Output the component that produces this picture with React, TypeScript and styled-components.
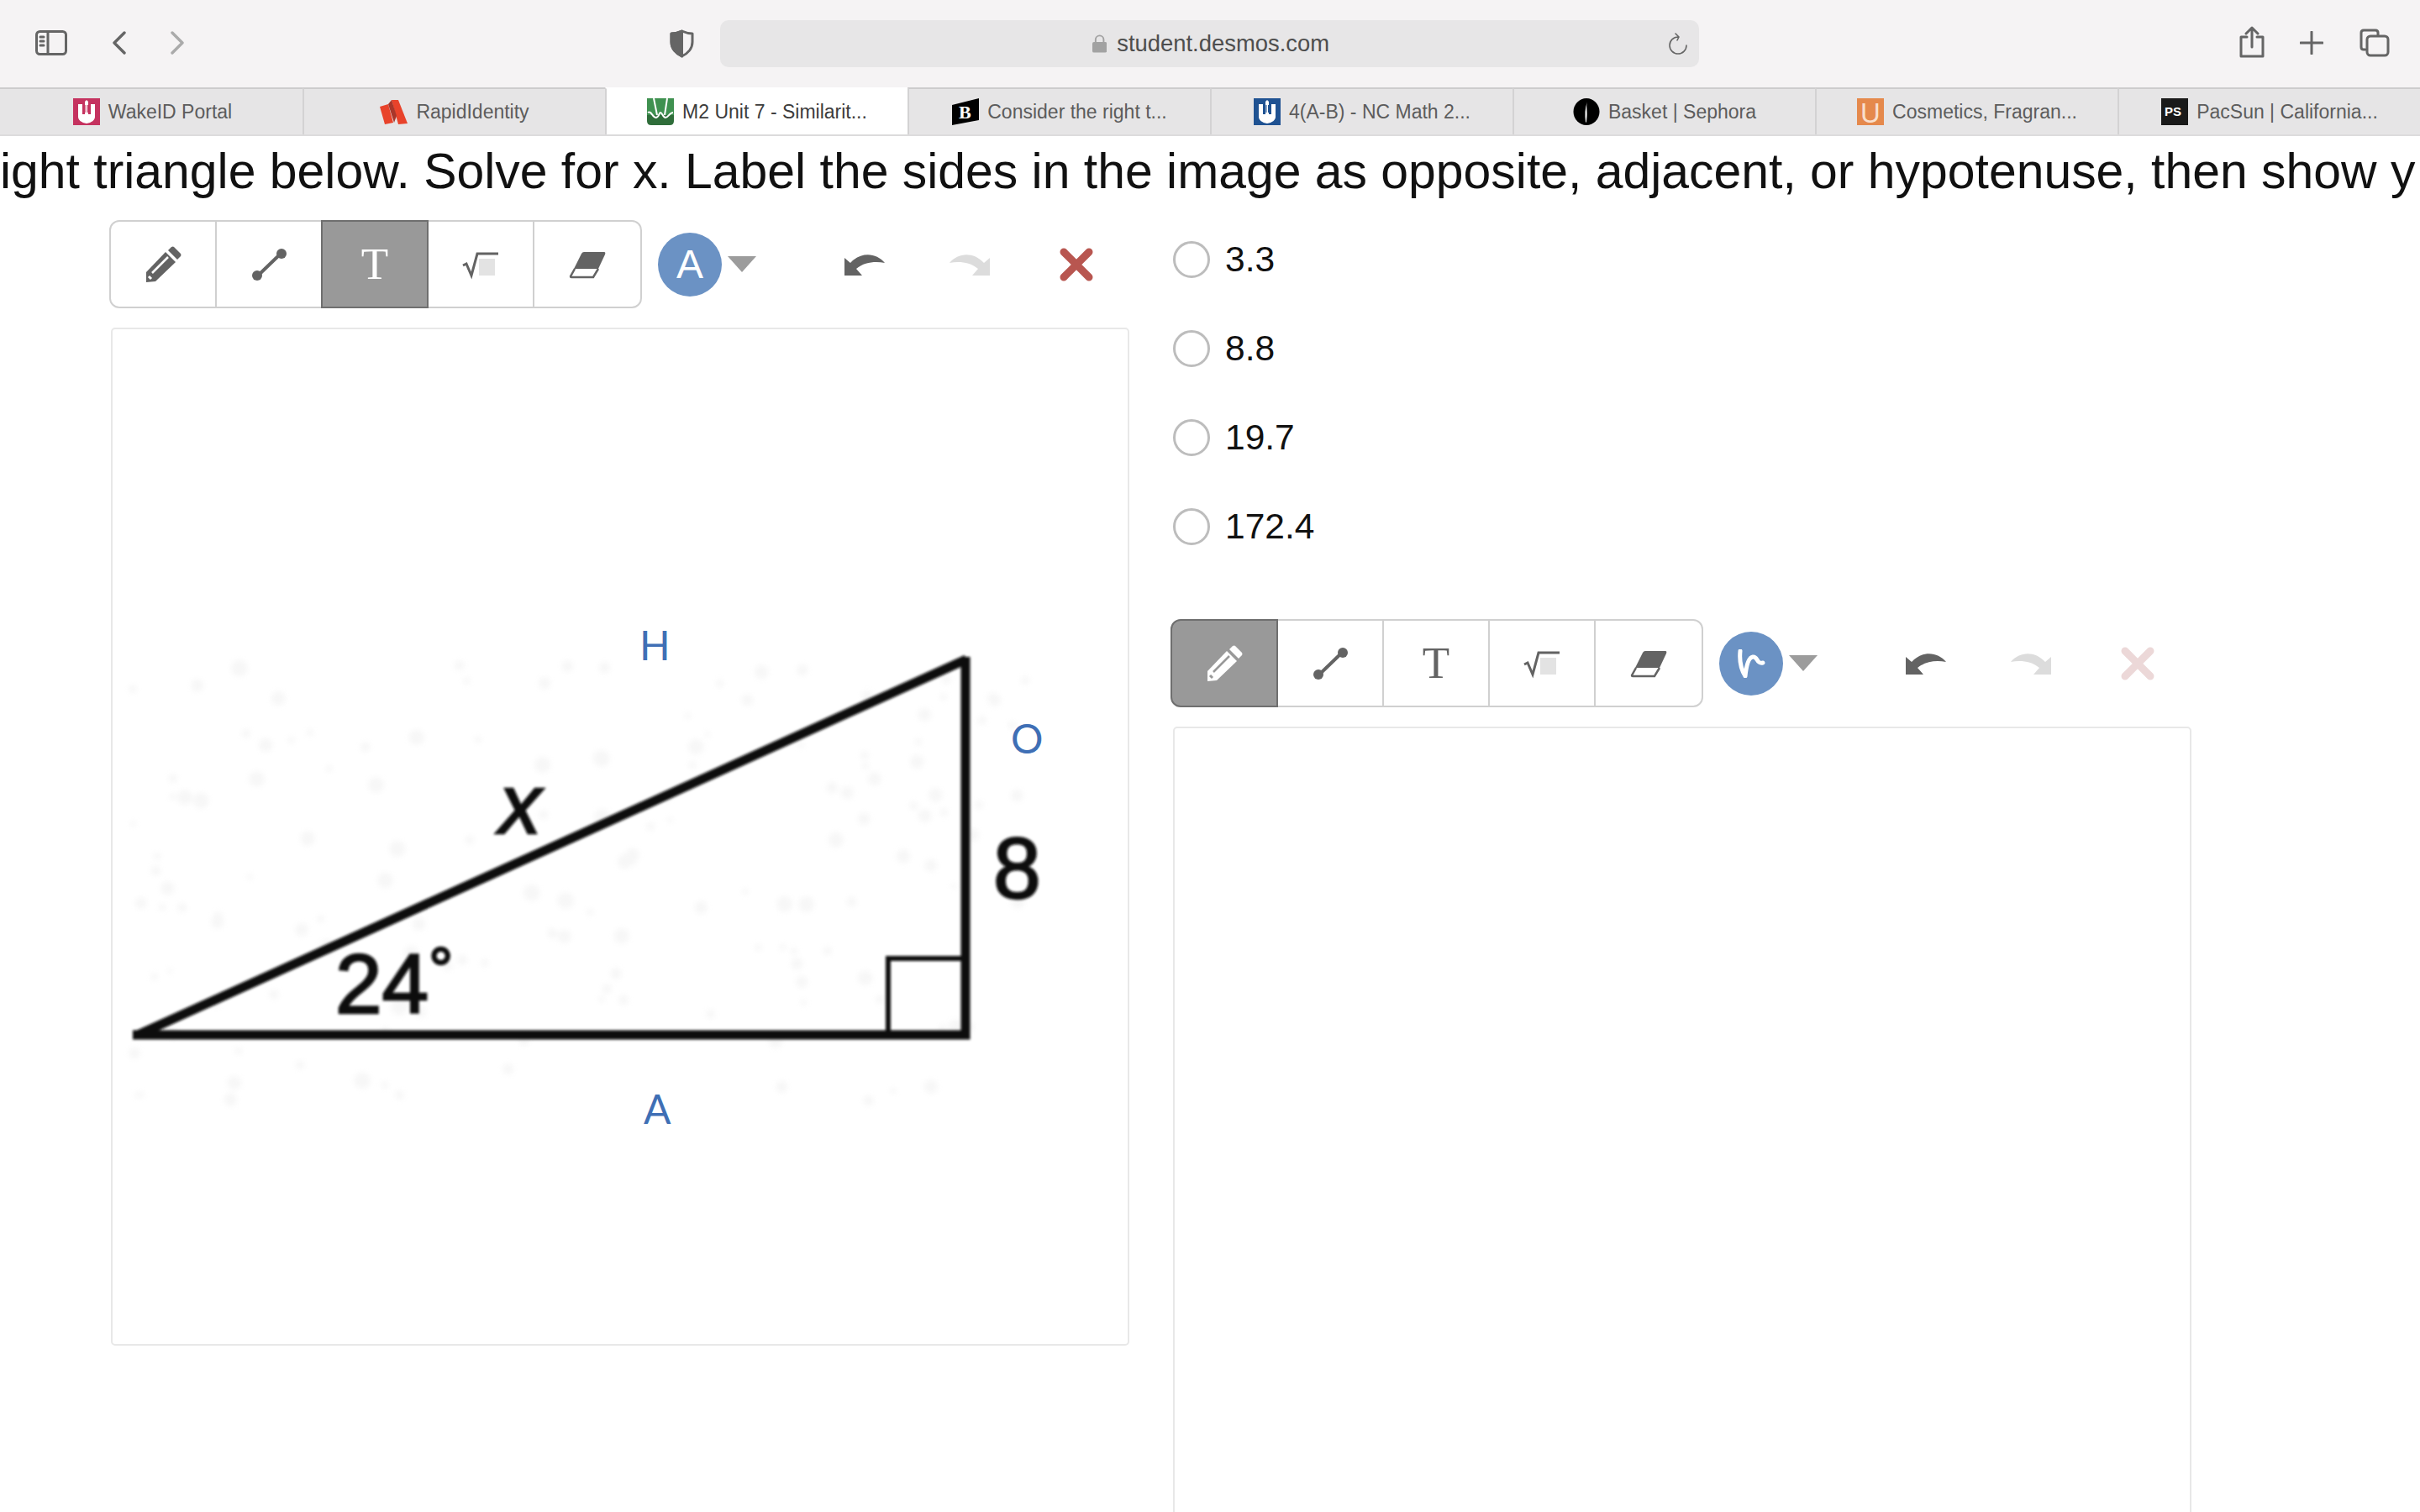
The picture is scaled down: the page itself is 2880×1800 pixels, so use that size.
// src/App.tsx

import styled, { createGlobalStyle } from "styled-components";

const GlobalStyle = createGlobalStyle`
  html, body {
    margin: 0;
    padding: 0;
    background: #fff;
    overflow: hidden;
  }
  * {
    box-sizing: border-box;
  }
`;

const Page = styled.div`
  width: 2880px;
  height: 1800px;
  overflow: hidden;
  font-family: "Liberation Sans", Arial, sans-serif;
  background: #fff;
`;

const TopBar = styled.header`
  height: 104px;
  padding-top: 24px;
  display: flex;
  align-items: flex-start;
  background: #f5f3f4;
  color: #656565;
`;

const NavIcon = styled.svg<{ $left: number; $top: number }>`
  display: block;
  flex: none;
  margin-left: ${(p) => p.$left}px;
  margin-top: ${(p) => p.$top}px;
  fill: none;
  stroke: currentColor;
  stroke-width: 3;
  stroke-linecap: round;
  stroke-linejoin: round;
`;

const AddressBar = styled.div`
  flex: none;
  width: 1165px;
  height: 56px;
  margin-left: 31px;
  padding: 0 13px 0 443px;
  display: flex;
  align-items: center;
  border-radius: 10px;
  background: #e7e6e7;
`;

const Url = styled.span`
  margin-left: 12px;
  font-size: 27.4px;
  color: #4e4e4e;
`;

const TabRow = styled.nav`
  height: 58px;
  display: flex;
  border-bottom: 2px solid #dcdbdc;
`;

const Tab = styled.div<{ $active?: boolean }>`
  flex: 0 0 360px;
  display: flex;
  justify-content: center;
  align-items: center;
  gap: 10px;
  font-size: 23px;
  color: ${(p) => (p.$active ? "#3c3c3c" : "#5c5c5c")};
  background: ${(p) => (p.$active ? "#fff" : "#e6e5e6")};
  border-top: 2px solid ${(p) => (p.$active ? "#fff" : "#cdcccd")};
  border-left: 2px solid #d3d2d3;
  &:first-child {
    border-left: 0;
    padding-left: 3px;
  }
`;

const Question = styled.h1`
  margin: 0;
  height: 100px;
  padding-bottom: 18px;
  display: flex;
  align-items: center;
  overflow: hidden;
  white-space: nowrap;
  font-size: 58.9px;
  font-weight: 400;
  color: #111;
`;

const Columns = styled.main`
  padding-left: 130px;
  display: flex;
  gap: 49px;
`;

const Column = styled.section`
  flex: none;
  width: 1214px;
`;

const RightColumn = styled(Column)`
  padding-left: 3px;
`;

const Options = styled.div`
  padding-top: 25px;
  margin-bottom: 88px;
  display: flex;
  flex-direction: column;
  gap: 62px;
`;

const Option = styled.label`
  height: 44px;
  display: flex;
  align-items: center;
  gap: 18px;
  font-size: 42.5px;
  color: #111;
`;

const Radio = styled.span`
  flex: none;
  width: 44px;
  height: 44px;
  border: 3px solid #bdbdbd;
  border-radius: 50%;
`;

const SketchBar = styled.div<{ $shift?: number }>`
  height: 105px;
  margin-left: ${(p) => p.$shift ?? 0}px;
  display: flex;
  align-items: center;
`;

const ToolGroup = styled.div`
  flex: none;
  width: 634px;
  height: 100%;
  display: flex;
`;

const Tool = styled.div<{ $active?: boolean }>`
  position: relative;
  z-index: ${(p) => (p.$active ? 1 : 0)};
  flex: 0 0 128px;
  margin-left: -2px;
  display: flex;
  justify-content: center;
  align-items: center;
  border: 2px solid ${(p) => (p.$active ? "#6f6f6f" : "#d0d0d0")};
  color: ${(p) => (p.$active ? "#fff" : "#636363")};
  background: ${(p) => (p.$active ? "#999" : "#fff")};
  --hole: ${(p) => (p.$active ? "#999" : "#fff")};
  &:first-child {
    margin-left: 0;
    border-radius: 12px 0 0 12px;
  }
  &:last-child {
    flex-basis: 130px;
    border-radius: 0 12px 12px 0;
  }
`;

const ToolGlyph = styled.span`
  font-family: "Liberation Serif", "Times New Roman", serif;
  font-size: 53px;
  line-height: 1;
`;

const ToolIcon = styled.svg`
  display: block;
  width: 44px;
  height: 44px;
`;

const Avatar = styled.div`
  flex: none;
  width: 76px;
  height: 76px;
  margin-left: 19px;
  display: flex;
  justify-content: center;
  align-items: center;
  border-radius: 50%;
  background: #6b92c4;
  color: #fff;
  font-size: 48px;
`;

const Caret = styled.span`
  flex: none;
  width: 0;
  height: 0;
  margin-left: 7px;
  border-left: 17px solid transparent;
  border-right: 17px solid transparent;
  border-top: 19px solid #9c9c9c;
`;

const ActionIcon = styled.svg<{ $gap: number; $color: string }>`
  display: block;
  flex: none;
  margin-left: ${(p) => p.$gap}px;
  color: ${(p) => p.$color};
`;

const Canvas = styled.div<{ $shift?: number }>`
  position: relative;
  width: 1212px;
  height: 1212px;
  margin-top: 23px;
  margin-left: ${(p) => p.$shift ?? 0}px;
  border: 2px solid #e8e8e8;
  border-radius: 5px;
  background: #fff;
`;

const CanvasLabel = styled.span<{ $x: number; $y: number }>`
  position: absolute;
  left: ${(p) => p.$x}px;
  top: ${(p) => p.$y}px;
  font-family: Lato, "Liberation Sans", sans-serif;
  font-size: 48px;
  line-height: 1;
  color: #3f6fb5;
`;

const Picture = styled.svg`
  display: block;
  width: 1208px;
  height: 1208px;
`;

const ImageText = styled.text`
  font-family: "Liberation Sans", Arial, sans-serif;
  fill: #111;
  stroke: #111;
  stroke-width: 2.5px;
`;

const tabs = [
  { id: "wake", title: "WakeID Portal" },
  { id: "rapid", title: "RapidIdentity" },
  { id: "desmos", title: "M2 Unit 7 - Similarit...", active: true },
  { id: "brainly", title: "Consider the right t..." },
  { id: "wcpss", title: "4(A-B) - NC Math 2..." },
  { id: "sephora", title: "Basket | Sephora" },
  { id: "ulta", title: "Cosmetics, Fragran..." },
  { id: "pacsun", title: "PacSun | California..." },
];

const options = ["3.3", "8.8", "19.7", "172.4"];

const hash = (n: number) => {
  const v = Math.sin(n * 127.1 + 311.7) * 43758.5453;
  return v - Math.floor(v);
};

// faint jpeg noise around the pasted triangle image
const specks = Array.from({ length: 150 }, (_, i) => ({
  x: 10 + hash(i) * 1080,
  y: 400 + hash(i + 500) * 520,
  r: 3 + hash(i + 900) * 7,
}));

const Favicon = ({ id }: { id: string }) => {
  if (id === "wake" || id === "wcpss") {
    return (
      <svg width="32" height="32" viewBox="0 0 32 32">
        <rect width="32" height="32" fill={id === "wake" ? "#c5325f" : "#1f5292"} />
        <path
          d="M6 7h5v12h3V4l2-2 2 2v15h3V7h5v15c0 4-4 7-10 8-6-1-10-4-10-8z"
          fill="#fff"
        />
        <path d="M14.5 8h1v9h-1zM17 8h1v9h-1z" fill={id === "wake" ? "#c5325f" : "#1f5292"} />
      </svg>
    );
  }
  if (id === "rapid") {
    return (
      <svg width="33" height="32" viewBox="0 0 33 32">
        <path d="M0 10l10-3 6 22-10 2z" fill="#e8432b" />
        <path d="M14 2h8l11 28-11 1z" fill="#e8432b" />
        <path d="M10 7l4-5 6 19-3 8z" fill="#a8362a" />
      </svg>
    );
  }
  if (id === "desmos") {
    return (
      <svg width="32" height="32" viewBox="0 0 32 32">
        <path d="M0 0h32v27q0 5-5 5H5q-5 0-5-5z" fill="#2f6d3a" />
        <path d="M0 0h32v20H0z" fill="#3f9150" />
        <path
          d="M1 17c4-3 6 7 10 6s3-6 5-6 3 6 6 6 5-6 9-6M8 0l4 20M24 0l-3 20"
          fill="none"
          stroke="#fff"
          strokeWidth="2"
        />
      </svg>
    );
  }
  if (id === "brainly") {
    return (
      <svg width="32" height="32" viewBox="0 0 32 32">
        <path d="M0 8L32 0v26L0 32z" fill="#000" />
        <text x="8" y="24" fontFamily="Liberation Serif" fontWeight="700" fontSize="22" fill="#fff">
          B
        </text>
      </svg>
    );
  }
  if (id === "sephora") {
    return (
      <svg width="32" height="32" viewBox="0 0 32 32">
        <ellipse cx="16" cy="16" rx="15.5" ry="16" fill="#000" />
        <path d="M17 4c-2 8 1 10-1 24 0 1-1 1-1 0-1-8-1-16 2-24z" fill="#fff" />
      </svg>
    );
  }
  if (id === "ulta") {
    return (
      <svg width="32" height="32" viewBox="0 0 32 32">
        <rect width="32" height="32" fill="#e5894c" />
        <text x="4" y="29" fontFamily="Liberation Sans" fontSize="33" fill="#f9dfcc">
          U
        </text>
      </svg>
    );
  }
  return (
    <svg width="32" height="32" viewBox="0 0 32 32">
      <rect width="32" height="32" fill="#1a1a1a" />
      <text x="4" y="21" fontFamily="Liberation Sans" fontWeight="700" fontSize="15" fill="#fff">
        PS
      </text>
    </svg>
  );
};

const PencilIcon = () => (
  <ToolIcon viewBox="0 0 44 44">
    <path d="M2 31L25 7l12 12-24 23-11 1z" fill="currentColor" />
    <path d="M9 32L28 13" stroke="var(--hole)" strokeWidth="2.5" />
    <path d="M5 36l3 3" stroke="var(--hole)" strokeWidth="3" />
    <path d="M28 5l4-4q2-1 3 0l8 8q1 2 0 3l-4 4z" fill="currentColor" />
  </ToolIcon>
);

const SegmentIcon = () => (
  <ToolIcon viewBox="0 0 44 44">
    <path d="M8 36L36 9" stroke="currentColor" strokeWidth="4" />
    <circle cx="8" cy="35" r="6" fill="currentColor" />
    <circle cx="37" cy="9" r="6" fill="currentColor" />
  </ToolIcon>
);

const RootIcon = () => (
  <ToolIcon viewBox="0 0 44 44">
    <rect x="20" y="15" width="19" height="20" fill="#e3e3e3" />
    <path d="M1 23l4-2 6 14 7-26h25" fill="none" stroke="currentColor" strokeWidth="3" />
  </ToolIcon>
);

const EraserIcon = () => (
  <ToolIcon viewBox="0 0 44 44">
    <path d="M15 9q1-2 3-2h24q2 0 1 3l-8 17H6z" fill="currentColor" />
    <path d="M7 27l-5 9q0 1 1 1h26l6-10" fill="none" stroke="currentColor" strokeWidth="2.5" />
  </ToolIcon>
);

const UNDO = "M0 5V26H21L14 18C24 10 36 9 48 11C38-1 20-3 7 11Z";

const SketchToolbar = ({
  active,
  avatar,
  close,
}: {
  active: number;
  avatar: React.ReactNode;
  close: string;
}) => (
  <>
    <ToolGroup>
      <Tool $active={active === 0}>
        <PencilIcon />
      </Tool>
      <Tool $active={active === 1}>
        <SegmentIcon />
      </Tool>
      <Tool $active={active === 2}>
        <ToolGlyph>T</ToolGlyph>
      </Tool>
      <Tool $active={active === 3}>
        <RootIcon />
      </Tool>
      <Tool $active={active === 4}>
        <EraserIcon />
      </Tool>
    </ToolGroup>
    <Avatar>{avatar}</Avatar>
    <Caret />
    <ActionIcon $gap={105} $color="#636363" width="48" height="26" viewBox="0 0 48 26">
      <path d={UNDO} fill="currentColor" />
    </ActionIcon>
    <ActionIcon $gap={77} $color="#dcdcdc" width="48" height="26" viewBox="0 0 48 26">
      <path d={UNDO} fill="currentColor" transform="matrix(-1 0 0 1 48 0)" />
    </ActionIcon>
    <ActionIcon $gap={83} $color={close} width="40" height="40" viewBox="0 0 40 40">
      <path d="M5 5l30 30M35 5L5 35" stroke="currentColor" strokeWidth="9" strokeLinecap="round" />
    </ActionIcon>
  </>
);

const TrianglePicture = () => (
  <Picture viewBox="0 0 1208 1208">
    <defs>
      <filter id="soft">
        <feGaussianBlur stdDeviation="1.6" />
      </filter>
      <filter id="noise">
        <feGaussianBlur stdDeviation="3" />
      </filter>
    </defs>
    <g filter="url(#noise)" fill="#dadada" opacity="0.22">
      {specks.map((s, i) => (
        <circle key={i} cx={s.x} cy={s.y} r={s.r} />
      ))}
    </g>
    <g filter="url(#soft)">
      <path d="M30 840L1016 393" stroke="#0c0c0c" strokeWidth="11" />
      <path d="M1015 390V840H24" fill="none" stroke="#0c0c0c" strokeWidth="11" />
      <path d="M923 838V749H1015" fill="none" stroke="#111" strokeWidth="6" />
      <ImageText x="265" y="814" fontSize="100">
        24
        <tspan fontSize="72" dy="-28">
          °
        </tspan>
      </ImageText>
      <ImageText x="460" y="600" fontSize="100" fontStyle="italic">
        x
      </ImageText>
      <ImageText x="1048" y="677" fontSize="102">
        8
      </ImageText>
    </g>
  </Picture>
);

const App = () => {
  return (
    <Page>
      <GlobalStyle />
      <TopBar>
        <NavIcon $left={42} $top={12} width="38" height="30" viewBox="0 0 38 30">
          <rect x="1.5" y="1.5" width="35" height="27" rx="4" />
          <path d="M15 2v26M6 8h4M6 13h4M6 18h4" />
        </NavIcon>
        <NavIcon $left={53} $top={13} width="17" height="28" viewBox="0 0 17 28">
          <path d="M15 2L3 14l12 12" strokeWidth="3.4" />
        </NavIcon>
        <NavIcon $left={53} $top={13} width="17" height="28" viewBox="0 0 17 28" color="#aaa">
          <path d="M2 2l12 12L2 26" strokeWidth="3.4" />
        </NavIcon>
        <NavIcon $left={577} $top={11} width="29" height="34" viewBox="0 0 29 34">
          <path d="M14.500 2C10 4 6 5 2 5v10c0 8 6 14 12.500 17C21 29 27 23 27 15V5c-4 0-8-1-12.500-3z" />
          <path d="M14.500 2C10 4 6 5 2 5v10c0 8 6 14 12.500 17z" fill="currentColor" />
        </NavIcon>
        <AddressBar>
          <svg width="18" height="22" viewBox="0 0 18 22">
            <path d="M4 10V6a5 5 0 0 1 10 0v4" fill="none" stroke="#a2a2a2" strokeWidth="2" />
            <rect y="9" width="18" height="13" rx="2" fill="#a2a2a2" />
          </svg>
          <Url>student.desmos.com</Url>
          <NavIcon
            $left={403}
            $top={0}
            width="24"
            height="26"
            viewBox="0 0 24 26"
            style={{ strokeWidth: 1.6 }}
          >
            <path d="M12 5a10 10 0 1 0 10 10M9 1l4 4-2 4" />
          </NavIcon>
        </AddressBar>
        <NavIcon $left={643} $top={7} width="30" height="38" viewBox="0 0 30 38">
          <path d="M9 13H2v23h26V13h-7M15 25V2M8 9l7-7 7 7" />
        </NavIcon>
        <NavIcon $left={42} $top={13} width="28" height="28" viewBox="0 0 28 28">
          <path d="M14 1v26M1 14h26" />
        </NavIcon>
        <NavIcon $left={43} $top={10} width="36" height="34" viewBox="0 0 36 34">
          <path d="M7 25H5q-3 0-3-3V5q0-3 3-3h14q3 0 3 3v3" />
          <rect x="9" y="9" width="25" height="23" rx="4" />
        </NavIcon>
      </TopBar>
      <TabRow>
        {tabs.map((tab) => (
          <Tab key={tab.id} $active={tab.active}>
            <Favicon id={tab.id} />
            {tab.title}
          </Tab>
        ))}
      </TabRow>
      <Question>
        ight triangle below. Solve for x. Label the sides in the image as opposite, adjacent, or
        hypotenuse, then show y
      </Question>
      <Columns>
        <Column>
          <SketchBar>
            <SketchToolbar active={2} avatar="A" close="#b85650" />
          </SketchBar>
          <Canvas $shift={2}>
            <TrianglePicture />
            <CanvasLabel $x={627} $y={352}>
              H
            </CanvasLabel>
            <CanvasLabel $x={1069} $y={463}>
              O
            </CanvasLabel>
            <CanvasLabel $x={632} $y={904}>
              A
            </CanvasLabel>
          </Canvas>
        </Column>
        <RightColumn>
          <Options>
            {options.map((value) => (
              <Option key={value}>
                <Radio />
                {value}
              </Option>
            ))}
          </Options>
          <SketchBar $shift={-3}>
            <SketchToolbar
              active={0}
              close="#ecd8d8"
              avatar={
                <svg width="34" height="34" viewBox="0 0 34 34">
                  <path
                    d="M4 2c-1 10 1 22 6 30 1-10 3-22 9-23s4 9 12 7"
                    fill="none"
                    stroke="#fff"
                    strokeWidth="5"
                    strokeLinecap="round"
                    strokeLinejoin="round"
                  />
                </svg>
              }
            />
          </SketchBar>
          <Canvas />
        </RightColumn>
      </Columns>
    </Page>
  );
};

export default App;
